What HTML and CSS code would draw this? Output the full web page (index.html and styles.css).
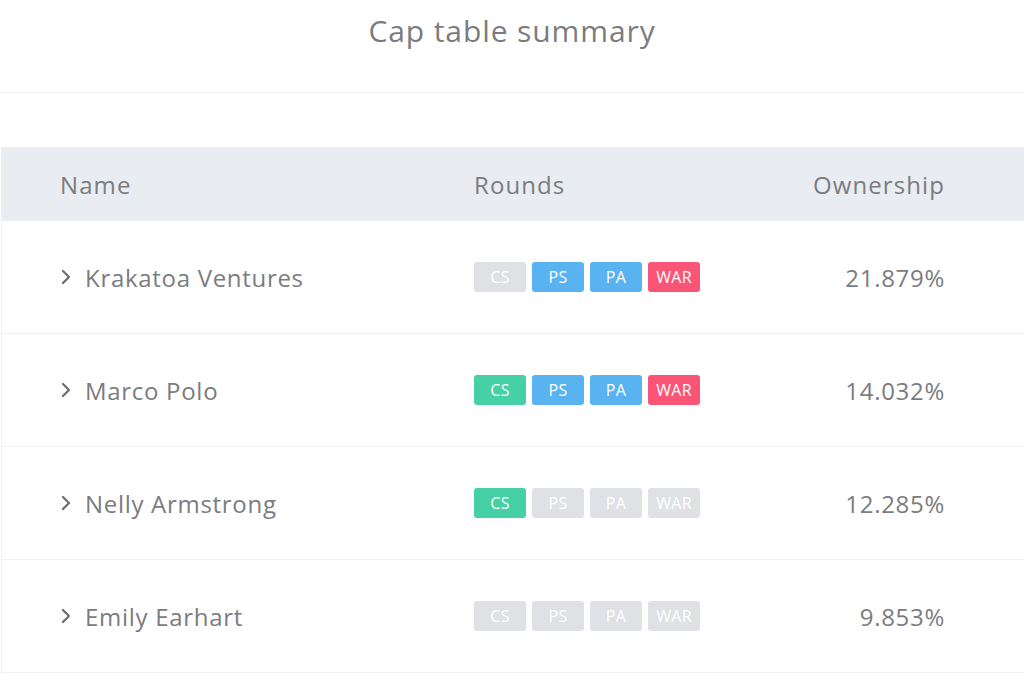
FILE: index.html
```html
<!DOCTYPE html>
<html lang="en">

<head>
    <meta charset="UTF-8">
    <meta name="viewport" content="width=device-width, initial-scale=1.0">
    <title>Cap table summary</title>
    <link rel="stylesheet" href="styles.css">
</head>

<body>
    <div class="page-title">
        <h1>Cap table summary</h1>
    </div>

    <div class="cap-table">
        <!-- Header -->
        <div class="table-head">
            <div class="col-name">Name</div>
            <div class="col-rounds">Rounds</div>
            <div class="col-own">Ownership</div>
        </div>

        <div class="table-row">
            <div class="col-name">
                <svg class="chevron" viewBox="0 0 12 18" width="12" height="18"><path d="M3 3l6 6-6 6" /></svg>
                Krakatoa Ventures
            </div>
            <div class="col-rounds">
                <span class="badge off">CS</span>
                <span class="badge ps">PS</span>
                <span class="badge pa">PA</span>
                <span class="badge war">WAR</span>
            </div>
            <div class="col-own">21.879%</div>
        </div>

        <div class="table-row">
            <div class="col-name">
                <svg class="chevron" viewBox="0 0 12 18" width="12" height="18"><path d="M3 3l6 6-6 6" /></svg>
                Marco Polo
            </div>
            <div class="col-rounds">
                <span class="badge cs">CS</span>
                <span class="badge ps">PS</span>
                <span class="badge pa">PA</span>
                <span class="badge war">WAR</span>
            </div>
            <div class="col-own">14.032%</div>
        </div>

        <div class="table-row">
            <div class="col-name">
                <svg class="chevron" viewBox="0 0 12 18" width="12" height="18"><path d="M3 3l6 6-6 6" /></svg>
                Nelly Armstrong
            </div>
            <div class="col-rounds">
                <span class="badge cs">CS</span>
                <span class="badge off">PS</span>
                <span class="badge off">PA</span>
                <span class="badge off">WAR</span>
            </div>
            <div class="col-own">12.285%</div>
        </div>

        <div class="table-row">
            <div class="col-name">
                <svg class="chevron" viewBox="0 0 12 18" width="12" height="18"><path d="M3 3l6 6-6 6" /></svg>
                Emily Earhart
            </div>
            <div class="col-rounds">
                <span class="badge off">CS</span>
                <span class="badge off">PS</span>
                <span class="badge off">PA</span>
                <span class="badge off">WAR</span>
            </div>
            <div class="col-own">9.853%</div>
        </div>
    </div>
</body>

</html>
```

FILE: styles.css
```css
* {
    margin: 0;
    padding: 0;
    box-sizing: border-box;
    font-family: "Open Sans", "Liberation Sans", sans-serif;
}

body {
    background-color: #fff;
    color: #7b7c7f;
    overflow: hidden;
}

.page-title {
    height: 93px;
    border-bottom: 1px solid #f1f2f4;
    text-align: center;
    padding-top: 10px;
}

.page-title h1 {
    font-size: 30px;
    font-weight: 400;
    line-height: 42px;
    letter-spacing: 0.9px;
    color: #7b7c7f;
}

.cap-table {
    margin-top: 54px;
    margin-left: 1px;
    border-left: 1px solid #eef0f2;
}

.table-head {
    display: flex;
    align-items: center;
    height: 74px;
    background-color: #e9edf1;
    font-size: 24px;
    letter-spacing: 1.1px;
    padding: 0 79px 0 58px;
}

.table-row {
    display: flex;
    align-items: center;
    height: 113px;
    border-bottom: 1px solid #eef0f2;
    font-size: 24px;
    letter-spacing: 0.7px;
    padding: 0 79px 0 58px;
}

.col-name {
    width: 414px;
    display: flex;
    align-items: center;
    gap: 13px;
}

.col-rounds {
    flex: 1;
    display: flex;
    gap: 6px;
}

.col-own {
    width: 200px;
    text-align: right;
}

.chevron {
    fill: none;
    stroke: #6e6f72;
    stroke-width: 2.3;
    stroke-linecap: round;
    stroke-linejoin: round;
}

.badge {
    width: 52px;
    height: 30px;
    border-radius: 3px;
    color: #fff;
    font-size: 16px;
    letter-spacing: 0.3px;
    display: flex;
    align-items: center;
    justify-content: center;
}

.badge.off {
    background-color: #dfe1e4;
}

.badge.cs {
    background-color: #46d0a6;
}

.badge.ps,
.badge.pa {
    background-color: #5ab3f1;
}

.badge.war {
    background-color: #fa5477;
}
```
